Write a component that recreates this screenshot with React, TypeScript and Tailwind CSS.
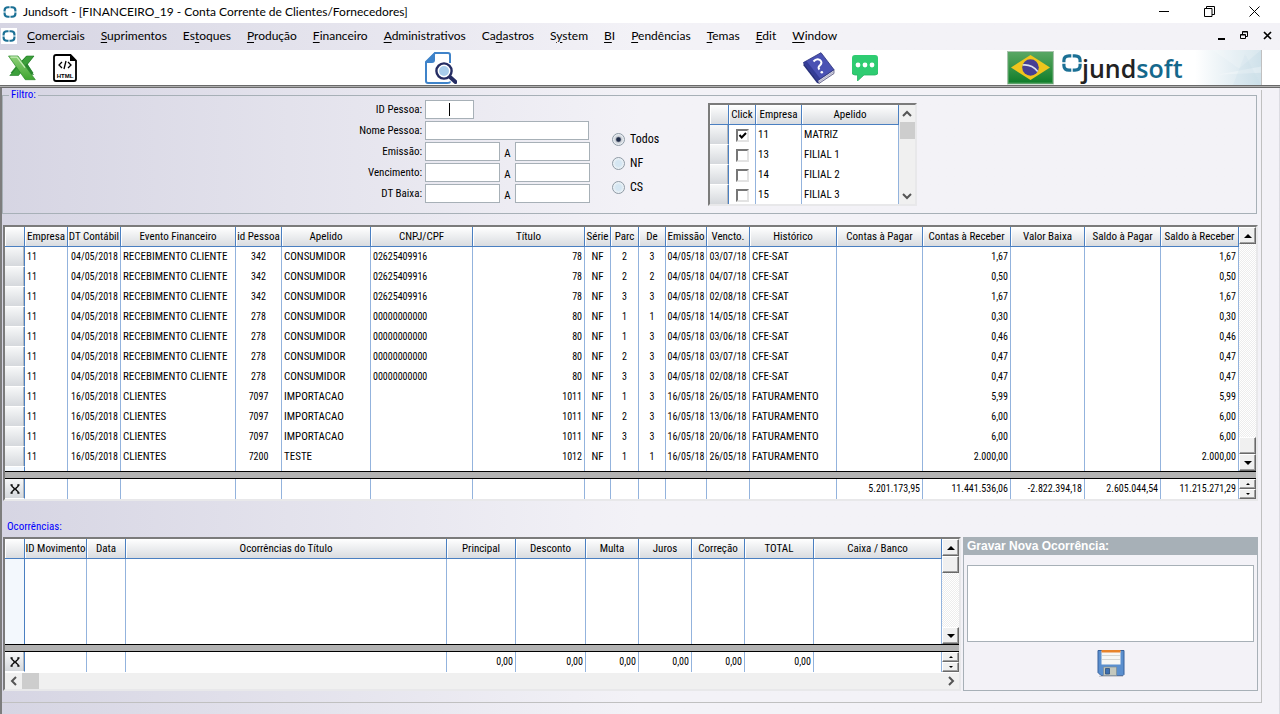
import React from "react";

type Align = "left" | "center" | "right";
type Column = { title: string; width: string; align: Align; numeric?: boolean };

const alignClass: Record<Align, string> = {
  left: "text-left pl-[2px]",
  center: "text-center",
  right: "text-right pr-[2px]",
};

const menu: [string, string, string][] = [
  ["", "C", "omerciais"],
  ["", "S", "uprimentos"],
  ["Es", "t", "oques"],
  ["", "P", "rodução"],
  ["", "F", "inanceiro"],
  ["", "A", "dministrativos"],
  ["Ca", "d", "astros"],
  ["S", "y", "stem"],
  ["", "B", "I"],
  ["", "P", "endências"],
  ["", "T", "emas"],
  ["", "E", "dit"],
  ["", "W", "indow"],
];

const mainColumns: Column[] = [
  { title: "Empresa", width: "w-[43px]", align: "left", numeric: true },
  { title: "DT Contábil", width: "w-[53px]", align: "right", numeric: true },
  { title: "Evento Financeiro", width: "w-[115px]", align: "left" },
  { title: "id Pessoa", width: "w-[46px]", align: "center", numeric: true },
  { title: "Apelido", width: "w-[89px]", align: "left" },
  { title: "CNPJ/CPF", width: "w-[102px]", align: "left", numeric: true },
  { title: "Título", width: "", align: "right", numeric: true },
  { title: "Série", width: "w-[26px]", align: "center" },
  { title: "Parc", width: "w-[28px]", align: "center", numeric: true },
  { title: "De", width: "w-[27px]", align: "center", numeric: true },
  { title: "Emissão", width: "w-[41px]", align: "center", numeric: true },
  { title: "Vencto.", width: "w-[43px]", align: "center", numeric: true },
  { title: "Histórico", width: "w-[87px]", align: "left" },
  { title: "Contas à Pagar", width: "w-[86px]", align: "right", numeric: true },
  { title: "Contas à Receber", width: "w-[88px]", align: "right", numeric: true },
  { title: "Valor Baixa", width: "w-[74px]", align: "right", numeric: true },
  { title: "Saldo à Pagar", width: "w-[76px]", align: "right", numeric: true },
  { title: "Saldo à Receber", width: "w-[78px]", align: "right", numeric: true },
];

function entry(
  date: string, event: string, person: string, alias: string, doc: string, title: string,
  part: string, of: string, issued: string, due: string, history: string, value: string,
): string[] {
  return ["11", date, event, person, alias, doc, title, "NF", part, of, issued, due, history, "", value, "", "", value];
}

const mainRows: string[][] = [
  entry("04/05/2018", "RECEBIMENTO CLIENTE", "342", "CONSUMIDOR", "02625409916", "78", "2", "3", "04/05/18", "03/07/18", "CFE-SAT", "1,67"),
  entry("04/05/2018", "RECEBIMENTO CLIENTE", "342", "CONSUMIDOR", "02625409916", "78", "2", "2", "04/05/18", "04/07/18", "CFE-SAT", "0,50"),
  entry("04/05/2018", "RECEBIMENTO CLIENTE", "342", "CONSUMIDOR", "02625409916", "78", "3", "3", "04/05/18", "02/08/18", "CFE-SAT", "1,67"),
  entry("04/05/2018", "RECEBIMENTO CLIENTE", "278", "CONSUMIDOR", "00000000000", "80", "1", "1", "04/05/18", "14/05/18", "CFE-SAT", "0,30"),
  entry("04/05/2018", "RECEBIMENTO CLIENTE", "278", "CONSUMIDOR", "00000000000", "80", "1", "3", "04/05/18", "03/06/18", "CFE-SAT", "0,46"),
  entry("04/05/2018", "RECEBIMENTO CLIENTE", "278", "CONSUMIDOR", "00000000000", "80", "2", "3", "04/05/18", "03/07/18", "CFE-SAT", "0,47"),
  entry("04/05/2018", "RECEBIMENTO CLIENTE", "278", "CONSUMIDOR", "00000000000", "80", "3", "3", "04/05/18", "02/08/18", "CFE-SAT", "0,47"),
  entry("16/05/2018", "CLIENTES", "7097", "IMPORTACAO", "", "1011", "1", "3", "16/05/18", "26/05/18", "FATURAMENTO", "5,99"),
  entry("16/05/2018", "CLIENTES", "7097", "IMPORTACAO", "", "1011", "2", "3", "16/05/18", "13/06/18", "FATURAMENTO", "6,00"),
  entry("16/05/2018", "CLIENTES", "7097", "IMPORTACAO", "", "1011", "3", "3", "16/05/18", "20/06/18", "FATURAMENTO", "6,00"),
  entry("16/05/2018", "CLIENTES", "7200", "TESTE", "", "1012", "1", "1", "16/05/18", "26/05/18", "FATURAMENTO", "2.000,00"),
];

const mainTotals = ["", "", "", "", "", "", "", "", "", "", "", "", "", "5.201.173,95", "11.441.536,06", "-2.822.394,18", "2.605.044,54", "11.215.271,29"];

const eventColumns: Column[] = [
  { title: "ID Movimento", width: "w-[62px]", align: "left" },
  { title: "Data", width: "w-[39px]", align: "left" },
  { title: "Ocorrências do Título", width: "", align: "left" },
  { title: "Principal", width: "w-[69px]", align: "right", numeric: true },
  { title: "Desconto", width: "w-[70px]", align: "right", numeric: true },
  { title: "Multa", width: "w-[53px]", align: "right", numeric: true },
  { title: "Juros", width: "w-[53px]", align: "right", numeric: true },
  { title: "Correção", width: "w-[53px]", align: "right", numeric: true },
  { title: "TOTAL", width: "w-[69px]", align: "right", numeric: true },
  { title: "Caixa / Banco", width: "w-[128px]", align: "left" },
];

const eventTotals = ["", "", "", "0,00", "0,00", "0,00", "0,00", "0,00", "0,00", ""];

const companies = [
  { id: "11", name: "MATRIZ", checked: true },
  { id: "13", name: "FILIAL 1", checked: false },
  { id: "14", name: "FILIAL 2", checked: false },
  { id: "15", name: "FILIAL 3", checked: false },
];

const headCell =
  "h-5 border-r border-b border-[#4a7fc1] bg-linear-to-b from-white to-[#d9dce0] p-0 text-center font-normal shadow-[inset_1px_1px_0_#ffffff]";
const rowHead =
  "border-r border-r-[#4a7fc1] border-b border-b-white bg-linear-to-b from-[#f7f8f9] to-[#d5d8dc] p-0 shadow-[inset_-1px_0_0_#b4b8bd]";
const track = "bg-[repeating-conic-gradient(#ffffff_0_25%,#ededed_0_50%)] bg-[length:2px_2px]";
const bevel = "border border-t-white border-l-white border-r-[#696969] border-b-[#696969] bg-[#f0f0f0] shadow-[inset_-1px_-1px_0_#a0a0a0]";

function LogoMark({ className }: { className: string }) {
  return (
    <svg viewBox="0 0 20 18" className={className} fill="none" stroke="#1b7095" strokeWidth="3.2" aria-hidden="true">
      <path d="M9.300 1.900H7Q1.900 1.900 1.900 6.500V8.300M10.700 1.900H13q5.100 0 5.100 4.600V8.300M9.300 16.100H7Q1.900 16.100 1.900 11.500V9.700M10.700 16.100H13q5.100 0 5.100-4.600V9.700" />
    </svg>
  );
}

function ArrowButton({ down, small, label }: { down?: boolean; small?: boolean; label: string }) {
  return (
    <button
      type="button"
      aria-label={label}
      className={`flex w-full shrink-0 items-center justify-center ${small ? "h-[10px]" : "h-[17px]"} ${bevel}`}
    >
      <svg viewBox="0 0 8 4" className={small ? "h-[2px] w-1" : "h-1 w-2"} aria-hidden="true">
        <path d={down ? "M0 0h8L4 4z" : "M0 4h8L4 0z"} fill="#000" />
      </svg>
    </button>
  );
}

function Chevron({ path, label, className }: { path: string; label: string; className: string }) {
  return (
    <button type="button" aria-label={label} className={`flex items-center justify-center ${className}`}>
      <svg viewBox="0 0 10 10" className="size-[10px]" fill="none" stroke="#555" strokeWidth="2" aria-hidden="true">
        <path d={path} />
      </svg>
    </button>
  );
}

function SumIcon() {
  return (
    <svg viewBox="0 0 10 10" className="mx-auto block size-[10px]" fill="none" stroke="#000" strokeWidth="1.300" aria-hidden="true">
      <path d="M.5 1H2v1.500L4 4v2L2 7.500V9H.5M9.500 1H8v1.500L6 4v2l2 1.500V9h1.500M3.500 5h3" />
    </svg>
  );
}

function DataGrid({ label, columns, rows, totals, fillerClass, thumbAtEnd }: {
  label: string; columns: Column[]; rows: string[][]; totals: string[]; fillerClass: string; thumbAtEnd: boolean;
}) {
  const thumb = <div className={`h-[17px] shrink-0 ${bevel}`} />;
  const cell = (v: string, j: number) => (
    <td key={j} className={`h-5 border-r border-[#93b3dd] py-0 ${alignClass[columns[j].align]} ${columns[j].numeric ? "text-[10px]" : ""}`}>
      {v}
    </td>
  );
  return (
    <div className="flex">
      <div className="min-w-0 flex-1 bg-white">
        <table aria-label={label} className="w-full table-fixed border-separate border-spacing-0 whitespace-nowrap">
          <thead>
            <tr>
              <th className={`w-5 ${headCell}`} aria-label="Linha" />
              {columns.map((c) => (
                <th key={c.title} className={`${headCell} ${c.width}`}>{c.title}</th>
              ))}
            </tr>
          </thead>
          <tbody>
            {rows.map((row, i) => (
              <tr key={i}>
                <td className={`h-5 ${rowHead}`} />
                {row.map(cell)}
              </tr>
            ))}
            <tr>
              <td className={`border-r border-[#4a7fc1] bg-[#f3f8fd] p-0 ${fillerClass}`} />
              {columns.map((c) => (
                <td key={c.title} className="border-r border-[#93b3dd] p-0" />
              ))}
            </tr>
          </tbody>
          <tfoot>
            <tr>
              <td colSpan={columns.length + 1} className="h-2 border-y border-black bg-[#b2b2b2] p-0" />
            </tr>
            <tr>
              <td className={`h-5 ${rowHead}`}><SumIcon /></td>
              {totals.map(cell)}
            </tr>
          </tfoot>
        </table>
      </div>
      <div className="flex w-[17px] flex-col">
        <ArrowButton label="Rolar para cima" />
        {!thumbAtEnd && thumb}
        <div className={`flex-1 ${track}`} />
        {thumbAtEnd && thumb}
        <ArrowButton down label="Rolar para baixo" />
        <div className="h-2 border-y border-black bg-[#b2b2b2]" />
        <ArrowButton small label="Total anterior" />
        <ArrowButton small down label="Próximo total" />
      </div>
    </div>
  );
}

const field = "h-[19px] border border-[#a7b0b7] bg-white px-1 outline-none";
const fieldLabel = "mr-[3px] w-20 pt-[3px] text-right";
const sunken = "border-2 border-t-[#7b7b7b] border-l-[#7b7b7b] border-r-[#e8e8ea] border-b-[#e8e8ea]";

function DateRange({ id, label }: { id: string; label: string }) {
  return (
    <div className="flex">
      <label htmlFor={id} className={fieldLabel}>{label}</label>
      <input id={id} type="text" className={`w-[75px] ${field}`} />
      <span className="w-[15px] pt-[5px] text-center">A</span>
      <input type="text" aria-label={`${label} até`} className={`w-[75px] ${field}`} />
    </div>
  );
}

function Filter() {
  return (
    <fieldset className="mt-[2px] mr-1 border border-[#a7b0b7] pb-[7px]">
      <legend className="ml-[6px] px-[2px] leading-[10px] text-[#0000ff]">Filtro:</legend>
      <div className="flex items-start">
        <div className="ml-[339px] flex w-[248px] flex-col gap-[2px]">
          <div className="flex">
            <label htmlFor="person-id" className={fieldLabel}>ID Pessoa:</label>
            <div className="relative flex">
              <input id="person-id" type="text" className={`w-[49px] ${field}`} />
              <span className="absolute top-[3px] left-6 h-[13px] w-px bg-black" />
            </div>
          </div>
          <div className="flex">
            <label htmlFor="person-name" className={fieldLabel}>Nome Pessoa:</label>
            <input id="person-name" type="text" className={`w-[164px] ${field}`} />
          </div>
          <DateRange id="issued" label="Emissão:" />
          <DateRange id="due" label="Vencimento:" />
          <DateRange id="settled" label="DT Baixa:" />
        </div>
        <div className="ml-[22px] w-24 pt-[27px] text-[12px]">
          {["Todos", "NF", "CS"].map((name, i) => (
            <label key={name} className="flex h-6 items-center gap-[5px]">
              <input
                type="radio"
                name="kind"
                defaultChecked={i === 0}
                className="size-[13px] appearance-none rounded-full border border-[#8e9aa5] bg-[radial-gradient(circle,#d5e6f2_0_35%,#eef3f7_70%)] checked:bg-[radial-gradient(circle,#1f2c48_0_22%,#c9cdd4_40%,#eef3f7_70%)]"
              />
              {name}
            </label>
          ))}
        </div>
        <div className={`mt-[3px] flex h-[103px] overflow-hidden ${sunken}`}>
          <table aria-label="Empresas" className="w-[189px] table-fixed border-separate border-spacing-0 bg-white">
            <thead>
              <tr>
                <th className={`w-[19px] ${headCell}`} aria-label="Linha" />
                <th className={`w-[27px] ${headCell}`}>Click</th>
                <th className={`w-[46px] ${headCell}`}>Empresa</th>
                <th className={headCell}>Apelido</th>
              </tr>
            </thead>
            <tbody>
              {companies.map((c) => (
                <tr key={c.id}>
                  <td className={`h-5 ${rowHead}`} />
                  <td className="h-5 border-r border-[#93b3dd] p-0">
                    <label className="relative mx-auto block size-[13px]">
                      <input
                        type="checkbox"
                        defaultChecked={c.checked}
                        aria-label={c.name}
                        className="peer block size-[13px] appearance-none border-2 border-t-[#777] border-l-[#777] border-r-[#e3e3e3] border-b-[#e3e3e3] bg-white"
                      />
                      <svg viewBox="0 0 13 13" className="absolute inset-0 hidden size-[13px] peer-checked:block" fill="none" stroke="#000" strokeWidth="2" aria-hidden="true">
                        <path d="M3.500 6l2.200 2.500L10 4" />
                      </svg>
                    </label>
                  </td>
                  <td className="h-5 border-r border-[#93b3dd] py-0 pl-[2px]">{c.id}</td>
                  <td className="h-5 border-r border-[#93b3dd] py-0 pl-[2px]">{c.name}</td>
                </tr>
              ))}
            </tbody>
          </table>
          <div className="flex w-4 flex-col bg-[#f0f0f0]">
            <Chevron path="M1 7l4-4 4 4" label="Rolar para cima" className="h-[17px]" />
            <div className="ml-px h-[17px] bg-[#cdcdcd]" />
            <div className="flex-1" />
            <Chevron path="M1 3l4 4 4-4" label="Rolar para baixo" className="h-[17px]" />
          </div>
        </div>
      </div>
    </fieldset>
  );
}

function ExcelIcon() {
  return (
    <svg viewBox="0 0 28 26" className="h-[26px] w-7" aria-hidden="true">
      <defs>
        <linearGradient id="xl" x1="0" y1="0" x2="0" y2="1">
          <stop offset="0" stopColor="#8fd17a" />
          <stop offset="1" stopColor="#3fa52f" />
        </linearGradient>
      </defs>
      <path d="M18.500 1h7.500L19.500 9l6 9H2.500L9 10z" fill="#2f8f35" />
      <path d="M18.500 1h7.500L10.500 20.500H1.800z" fill="#3c9f3a" stroke="#1f7a25" strokeWidth=".6" />
      <path d="M13 13.500l6-5 7 11.500-6-1z" fill="#2a8530" />
      <path d="M.5 1h9.500L27.300 24.700h-10z" fill="url(#xl)" stroke="#2a8a2a" strokeWidth=".7" />
      <path d="M2.500 2.200h6.500l8 10.500" fill="none" stroke="#c6ecb8" strokeWidth="1.200" />
    </svg>
  );
}

function HtmlIcon() {
  return (
    <svg viewBox="0 0 24 28" className="h-7 w-6" aria-hidden="true">
      <path d="M3 1h14.500L23 6.500V25q0 2-2 2H3q-2 0-2-2V3q0-2 2-2z" fill="#fff" stroke="#000" strokeWidth="1.800" />
      <path d="M17 1v6h6z" fill="#000" />
      <path d="M9 8l-3 3 3 3M15 8l3 3-3 3M13 7l-2 8" fill="none" stroke="#000" strokeWidth="1.300" />
      <text x="12" y="23.500" textAnchor="middle" fontSize="6" fontWeight="700" fontFamily="Liberation Sans, sans-serif">HTML</text>
    </svg>
  );
}

function SearchDocIcon() {
  return (
    <svg viewBox="0 0 32 32" className="size-8" aria-hidden="true">
      <path d="M25 11V3q0-2-2-2H10L1 10v19q0 2 2 2h19q3 0 3-1.500" fill="none" stroke="#3f83c9" strokeWidth="2" />
      <path d="M10 0v8q0 3-3 3H0z" fill="#3f83c9" />
      <path d="M25 25l5.500 5" stroke="#252d63" strokeWidth="4" strokeLinecap="round" />
      <circle cx="19" cy="19" r="7.600" fill="#fff" stroke="#252d63" strokeWidth="2.400" />
      <circle cx="19" cy="19" r="5" fill="#a9cdeb" />
    </svg>
  );
}

function HelpBookIcon() {
  return (
    <svg viewBox="0 0 32 32" className="size-8" aria-hidden="true">
      <path d="M14.500 28.500L31 17.500v4L16 31.500z" fill="#d4d4e2" stroke="#55557c" strokeWidth=".8" />
      <path d="M15 30.500L31 19.500" stroke="#9a9ab8" strokeWidth=".6" />
      <path d="M.5 10.500v3L14 31l2 .5-1.500-3z" fill="#27307c" />
      <path d="M.5 10.500L18 .7l13 17-16.500 11z" fill="#4a52b3" stroke="#282f78" strokeWidth=".8" />
      <path d="M.5 10.500L3.500 9l14 18-3 1.500z" fill="#343c96" />
      <path d="M10.500 9.500q3-3.500 6.500-1.500 3 2.500-.2 5.500-2.300 2-.3 4" fill="none" stroke="#fff" strokeWidth="2" />
      <circle cx="18.800" cy="20.300" r="1.300" fill="#fff" />
    </svg>
  );
}

function ChatIcon() {
  return (
    <svg viewBox="0 0 26 26" className="size-[26px]" aria-hidden="true">
      <path d="M3 0h20q3 0 3 3v14q0 3-3 3H12l-6.500 6V20H3q-3 0-3-3V3q0-3 3-3z" fill="#2ecc71" />
      <path d="M0 17q0 3 3 3h2.500v6L12 20h11q3 0 3-3" fill="none" stroke="#27b463" strokeWidth=".8" />
      <circle cx="6" cy="10" r="2.400" fill="#fff" />
      <circle cx="13" cy="10" r="2.400" fill="#fff" />
      <circle cx="20" cy="10" r="2.400" fill="#fff" />
    </svg>
  );
}

function BrazilFlag() {
  return (
    <svg viewBox="0 0 47 34" className="h-[34px] w-[47px]" aria-hidden="true">
      <defs>
        <linearGradient id="flag" x1="0" y1="0" x2="0" y2="1">
          <stop offset="0" stopColor="#5aa864" />
          <stop offset=".45" stopColor="#3a9548" />
          <stop offset="1" stopColor="#0c7a28" />
        </linearGradient>
      </defs>
      <rect x=".5" y=".5" width="46" height="32.500" fill="url(#flag)" stroke="#a9c3ad" />
      <rect x="1.500" y="1.500" width="44" height="30.500" fill="none" stroke="#58a565" strokeWidth=".8" />
      <path d="M4 16.500L23.500 4 43 16.500 23.500 29z" fill="#f0c51d" />
      <circle cx="23.500" cy="16.500" r="8.300" fill="#473f94" />
      <path d="M15.700 14q9-1 15 6.500" fill="none" stroke="#dfe3ee" strokeWidth="1.600" />
    </svg>
  );
}

function FloppyIcon() {
  return (
    <svg viewBox="0 0 28 28" className="size-7" aria-hidden="true">
      <path d="M1 1.500h26v24l-1 1H4l-3-3z" fill="#5a8fce" stroke="#37619b" />
      <path d="M4.500 2h19v13.500h-19z" fill="#f7f7f5" />
      <path d="M4.500 1h19v2.500h-19z" fill="#e8832a" />
      <path d="M5 6.500h18M5 10.500h18" stroke="#d6d6d2" />
      <path d="M6.500 18h13v8.500h-13z" fill="#c4c8bd" stroke="#7d8d97" strokeWidth=".7" />
      <path d="M8.500 19.500h4v5.500h-4z" fill="#3c6fb0" stroke="#2d4f7c" strokeWidth=".8" />
      <path d="M2 27.300h24" stroke="#c2c2c8" />
    </svg>
  );
}

function BrandLogo() {
  return (
    <div className="relative flex h-full w-[199px] items-center overflow-hidden">
      <svg viewBox="0 0 66 34" preserveAspectRatio="none" className="absolute inset-y-0 right-0 h-full w-[66px]" aria-hidden="true">
        <defs>
          <linearGradient id="fade" x1="0" x2="1" y1="0" y2="0">
            <stop offset="0" stopColor="#ffffff" />
            <stop offset="1" stopColor="#cfe1ea" />
          </linearGradient>
        </defs>
        <path d="M0 0h66v34H0z" fill="url(#fade)" />
        <path d="M18 0l26 18L66 0z" fill="#fff" opacity=".2" />
        <path d="M22 24l44-8v6z" fill="#fff" opacity=".3" />
        <path d="M38 34L50 4l16 30z" fill="#bcd6e2" opacity=".15" />
      </svg>
      <LogoMark className="mb-[10px] h-[18px] w-5" />
      <span className="relative mt-[1px] font-['Open_Sans',sans-serif] text-[25px] leading-none font-semibold text-[#222]">
        jund<span className="text-[#14688c]">soft</span>
      </span>
    </div>
  );
}

export default function App() {
  const winIcon = "fill-none stroke-black";
  return (
    <div className="flex min-h-screen flex-col bg-linear-to-r from-[#d6d5e3] to-[#f3f2f7] to-50% font-['Arial_Narrow','Roboto_Condensed','Open_Sans_Condensed','Liberation_Sans',sans-serif] text-[11px] leading-[14px] text-black">
      <header className="flex h-[23px] items-center bg-white pl-[3px] font-['Lato',sans-serif] text-[12px]">
        <LogoMark className="h-3 w-[14px]" />
        <h1 className="ml-[6px] flex-1">Jundsoft - [FINANCEIRO_19 - Conta Corrente de Clientes/Fornecedores]</h1>
        <div className="flex gap-[34px] pr-5">
          <button type="button" aria-label="Minimizar">
            <svg viewBox="0 0 11 11" className={`size-[11px] ${winIcon}`}><path d="M0 5.500h10" /></svg>
          </button>
          <button type="button" aria-label="Restaurar">
            <svg viewBox="0 0 11 11" className={`size-[11px] ${winIcon}`}><path d="M.5 2.500h7.500v8H.5zM2.500 2.500v-2h8v8H8" /></svg>
          </button>
          <button type="button" aria-label="Fechar">
            <svg viewBox="0 0 11 11" className={`size-[11px] ${winIcon}`}><path d="M.5 .5l10 10M10.500 .5l-10 10" /></svg>
          </button>
        </div>
      </header>

      <nav className="flex h-[27px] items-center pb-[2px] font-['Lato',sans-serif] text-[12px]">
        <span className="ml-[1px] flex h-4 w-4 items-center justify-center bg-white"><LogoMark className="h-3 w-[14px]" /></span>
        <div className="ml-[10px] flex flex-1 gap-4">
          {menu.map(([before, key, after]) => (
            <button key={before + key + after} type="button">
              {before}<span className="underline underline-offset-2">{key}</span>{after}
            </button>
          ))}
        </div>
        <div className="flex gap-[14px] pr-2">
          <button type="button" aria-label="Minimizar documento">
            <svg viewBox="0 0 9 9" className={`size-[9px] ${winIcon}`} strokeWidth="2"><path d="M1 8h7" /></svg>
          </button>
          <button type="button" aria-label="Restaurar documento">
            <svg viewBox="0 0 9 9" className={`size-[9px] ${winIcon}`}><path d="M.5 3.500h5v4h-5zM.5 4h5M2.500 3V.500h5v5H6M2.500 1h5" /></svg>
          </button>
          <button type="button" aria-label="Fechar documento">
            <svg viewBox="0 0 9 9" className={`size-[9px] ${winIcon}`} strokeWidth="1.700"><path d="M1 1l7 7M8 1l-7 7" /></svg>
          </button>
        </div>
      </nav>

      <div className="flex h-[35px] items-center bg-white">
        <button type="button" aria-label="Exportar para Excel" className="ml-2"><ExcelIcon /></button>
        <button type="button" aria-label="Exportar para HTML" className="ml-[17px]"><HtmlIcon /></button>
        <button type="button" aria-label="Pesquisar" className="ml-[348px]"><SearchDocIcon /></button>
        <button type="button" aria-label="Ajuda" className="ml-[346px]"><HelpBookIcon /></button>
        <button type="button" aria-label="Mensagens" className="ml-[17px]"><ChatIcon /></button>
        <div className="flex-1" />
        <button type="button" aria-label="Português do Brasil" className="mr-2"><BrazilFlag /></button>
        <BrandLogo />
        <div className="h-full w-[19px] border-l border-[#c0c0c0]" />
      </div>
      <div className="h-[3px] border-y border-[#6a6a6a] bg-[#b0b0b0]" />

      <main className="flex-1 border-r border-l-2 border-r-[#dcdce2] border-l-[#7d7d7d]">
        <div className="mr-[17px] border-r border-b border-[#c0c0c0] pb-[11px]">
          <Filter />

          <div className={`mt-[11px] mr-[3px] ml-px ${sunken}`}>
            <DataGrid label="Conta corrente" columns={mainColumns} rows={mainRows} totals={mainTotals} fillerClass="h-1" thumbAtEnd />
          </div>

          <h2 className="mt-[19px] mb-[3px] ml-[5px] text-[#0000ff]">Ocorrências:</h2>

          <div className="mr-[3px] ml-px flex gap-[2px]">
            <div className={`min-w-0 flex-1 ${sunken}`}>
              <DataGrid label="Ocorrências" columns={eventColumns} rows={[]} totals={eventTotals} fillerClass="h-[85px]" thumbAtEnd={false} />
              <div className="flex h-[17px] items-center border-t border-white bg-[#f0f0f0]">
                <Chevron path="M7 1L3 5l4 4" label="Rolar para a esquerda" className="h-4 w-[17px]" />
                <div className="h-4 w-[17px] bg-[#cdcdcd]" />
                <div className="flex-1" />
                <Chevron path="M3 1l4 4-4 4" label="Rolar para a direita" className="h-4 w-[17px]" />
              </div>
            </div>
            <section className="flex w-[295px] flex-col border border-[#a7b0b7] bg-[#f3f2f7]">
              <label htmlFor="note" className="bg-[#a7b0b7] pl-[3px] font-['Liberation_Sans',sans-serif] text-[12px] leading-[17px] font-bold text-white">
                Gravar Nova Ocorrência:
              </label>
              <textarea id="note" className="mx-[3px] mt-[10px] h-[77px] resize-none border border-[#a7b0b7] bg-white p-1 outline-none" />
              <button type="button" aria-label="Gravar" className="mt-[7px] self-center"><FloppyIcon /></button>
            </section>
          </div>
        </div>
      </main>
    </div>
  );
}
